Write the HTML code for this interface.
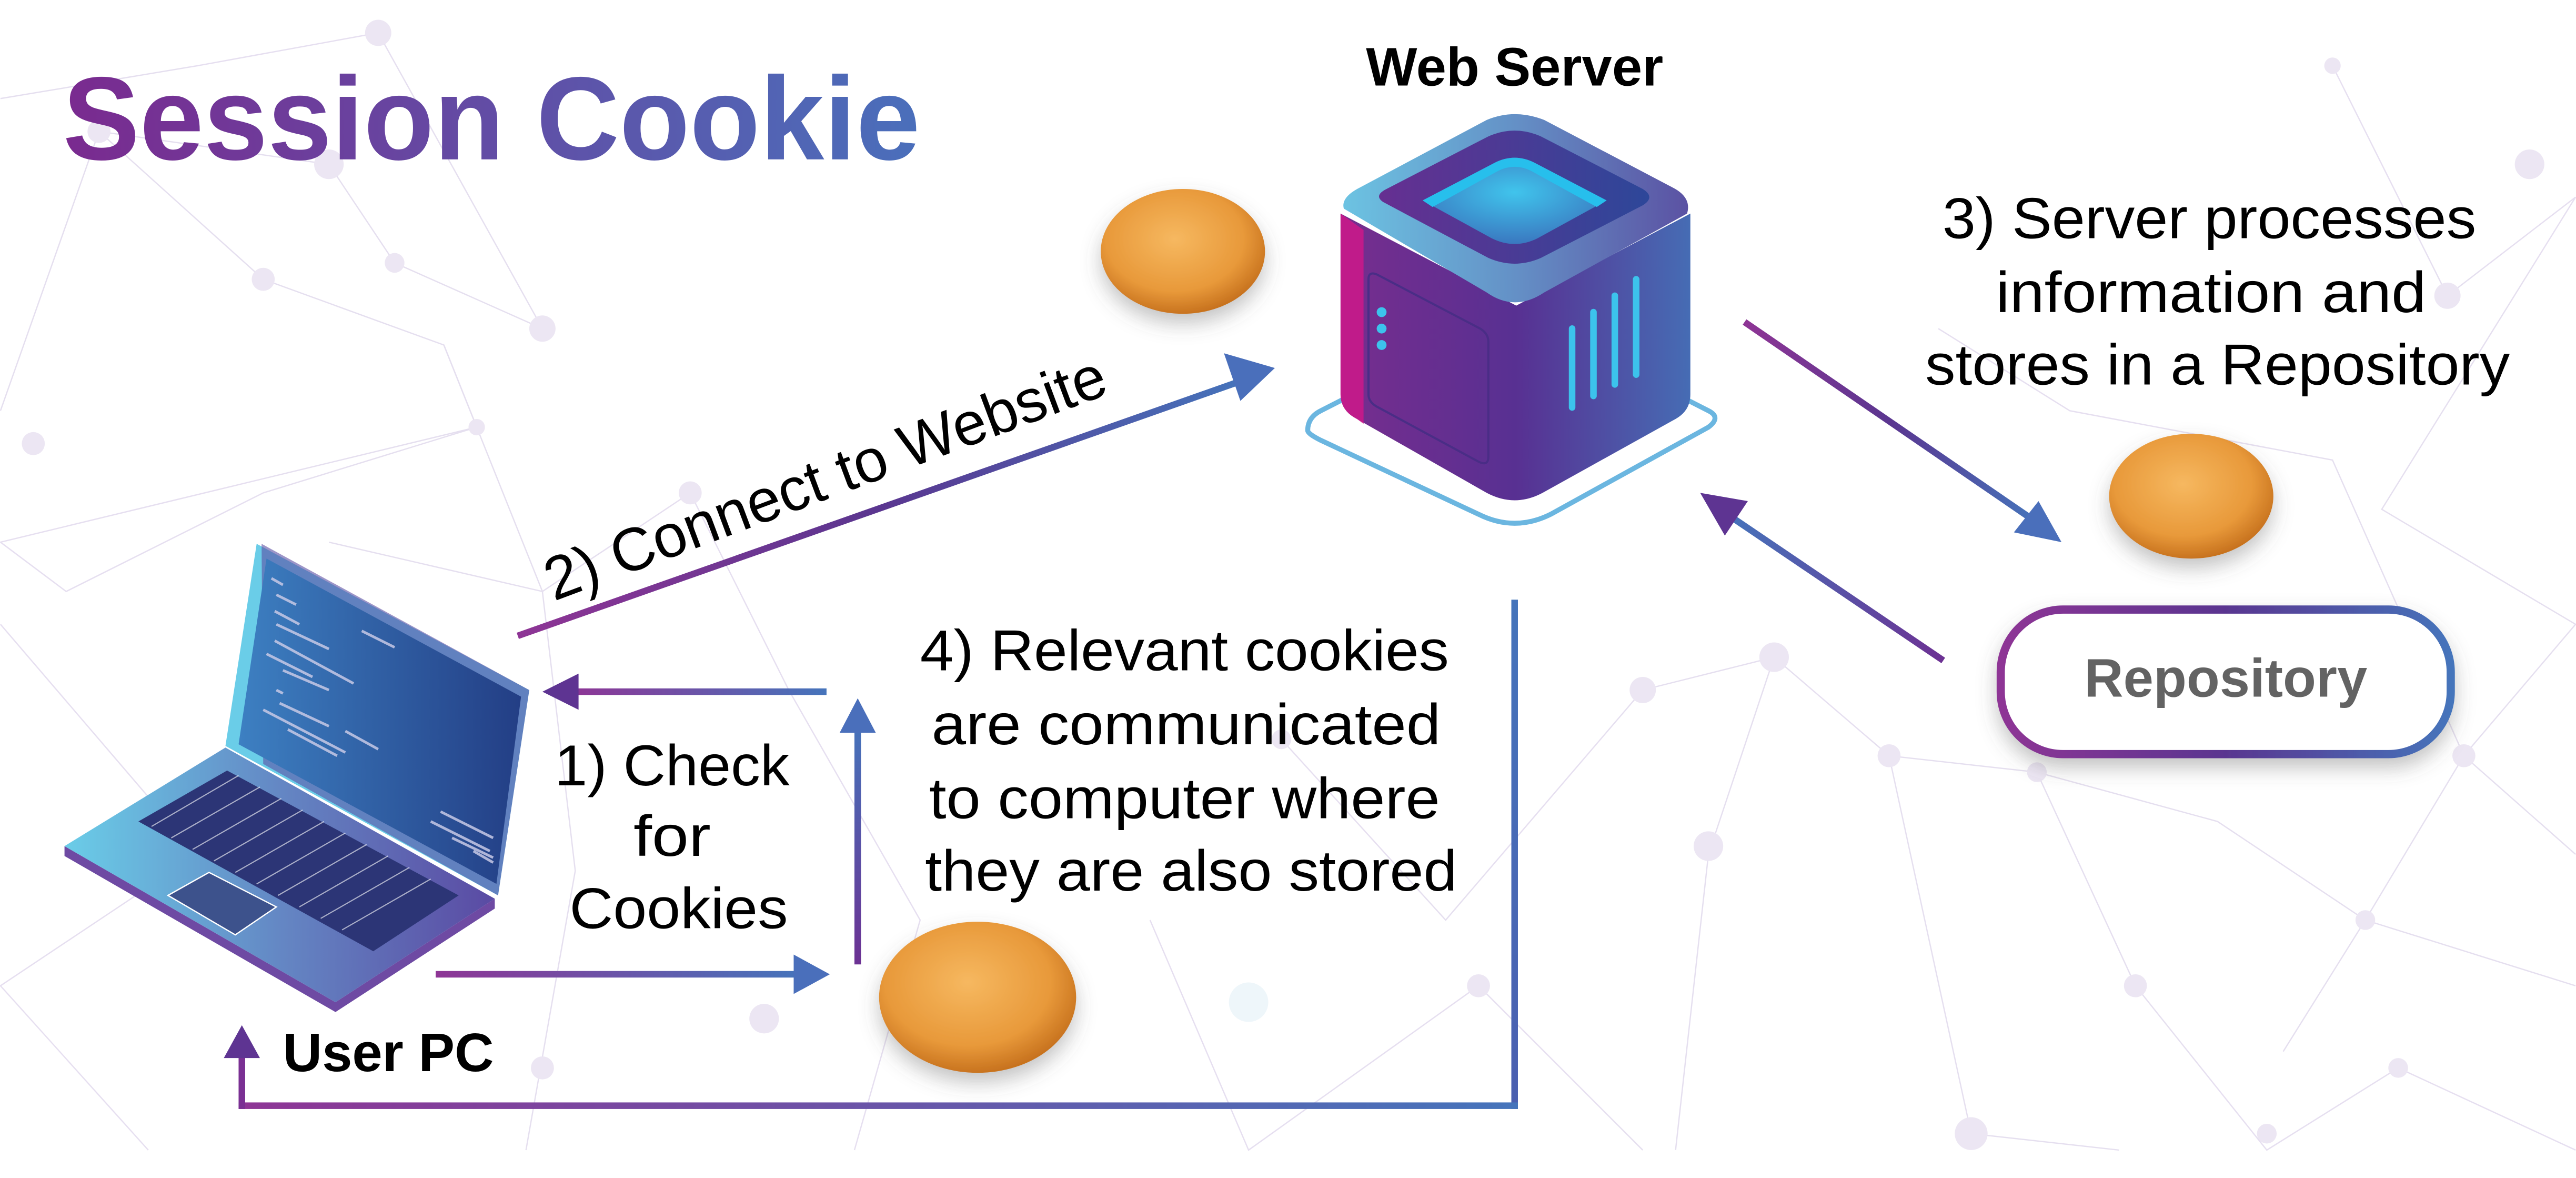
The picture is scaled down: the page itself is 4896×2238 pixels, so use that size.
<!DOCTYPE html>
<html><head><meta charset="utf-8"><style>
html,body{margin:0;padding:0;background:#fff;}
svg{display:block;}
text{font-family:"Liberation Sans",sans-serif;}
</style></head><body>
<svg width="4896" height="2238" viewBox="0 0 1568 717" xmlns="http://www.w3.org/2000/svg">
<defs>
<linearGradient id="tg" x1="0" x2="1"><stop offset="0" stop-color="#7a2a8f"/><stop offset="1" stop-color="#4a6fbb"/></linearGradient>
<linearGradient id="pb" x1="0" x2="1"><stop offset="0" stop-color="#8e3595"/><stop offset="0.5" stop-color="#5a3690"/><stop offset="1" stop-color="#4574bb"/></linearGradient>
<linearGradient id="bp" x1="0" x2="1"><stop offset="0" stop-color="#4574bb"/><stop offset="1" stop-color="#6c3193"/></linearGradient>
<linearGradient id="pbH" x1="0" x2="1"><stop offset="0" stop-color="#8e3595"/><stop offset="1" stop-color="#4574bb"/></linearGradient>
<linearGradient id="vg" x1="0" y1="1" x2="0" y2="0"><stop offset="0" stop-color="#6c3193"/><stop offset="1" stop-color="#4574bb"/></linearGradient>
<linearGradient id="vg2" x1="0" y1="0" x2="0" y2="1"><stop offset="0" stop-color="#4574bb"/><stop offset="1" stop-color="#4a5fb0"/></linearGradient>
<linearGradient id="srvF" x1="0" x2="1"><stop offset="0" stop-color="#772d8e"/><stop offset="0.5" stop-color="#583092"/><stop offset="1" stop-color="#466cb4"/></linearGradient>
<linearGradient id="srvT" x1="0" x2="1"><stop offset="0" stop-color="#6cc3e2"/><stop offset="0.5" stop-color="#6490c6"/><stop offset="1" stop-color="#5b52a3"/></linearGradient>
<linearGradient id="srvI" x1="0" x2="1"><stop offset="0" stop-color="#662f91"/><stop offset="1" stop-color="#2d4799"/></linearGradient>
<radialGradient id="scr" cx="0.5" cy="0.4" r="0.6"><stop offset="0" stop-color="#40c4ec"/><stop offset="1" stop-color="#3a78c0"/></radialGradient>
<linearGradient id="lapS" x1="0" x2="1"><stop offset="0" stop-color="#3d80c2"/><stop offset="1" stop-color="#233e85"/></linearGradient>
<linearGradient id="lapB" x1="0" x2="1"><stop offset="0" stop-color="#6acde8"/><stop offset="0.5" stop-color="#6487c4"/><stop offset="1" stop-color="#5a4aa3"/></linearGradient>
<radialGradient id="ck" cx="0.45" cy="0.4" r="0.6"><stop offset="0" stop-color="#f6b860"/><stop offset="0.7" stop-color="#e8993a"/><stop offset="1" stop-color="#c8731f"/></radialGradient>
<filter id="sh" x="-20%" y="-20%" width="140%" height="160%"><feDropShadow dx="0" dy="6" stdDeviation="6" flood-color="#555" flood-opacity="0.35"/></filter>
</defs>

<!-- background network -->
<g stroke="#e3dcee" stroke-width="0.8" fill="none" opacity="0.9">
<path d="M0 250 L60 80 L200 100 L240 160 L330 200 L230 20 L120 40 L0 60"/>
<path d="M60 80 L160 170 L270 210 L290 260 L0 330 L40 360 L160 300 L290 260"/>
<path d="M270 210 L330 360 L350 530 L320 700"/>
<path d="M200 330 L330 360 L420 300 L480 420 L560 560 L520 700"/>
<path d="M0 380 L120 520 L0 600 L90 700"/>
<path d="M1000 420 L1080 400 L1150 460 L1240 470 L1300 600 L1380 700 L1460 650 L1568 700"/>
<path d="M1080 400 L1040 520 L1020 700"/><path d="M1150 460 L1200 690 L1290 700"/>
<path d="M1420 40 L1490 180 L1568 120 L1450 310 L1568 380 L1500 460 L1568 520"/>
<path d="M1180 200 L1260 250 L1420 280 L1500 460 L1440 560 L1568 600"/>
<path d="M700 560 L760 700 L900 600 L1000 700"/><path d="M780 450 L880 560 L1000 420"/>
<path d="M1240 470 L1350 500 L1440 560 L1390 640"/>
</g>
<g fill="#ece6f3">
<circle cx="60" cy="80" r="7"/><circle cx="200" cy="100" r="9"/><circle cx="240" cy="160" r="6"/><circle cx="160" cy="170" r="7"/><circle cx="290" cy="260" r="5"/><circle cx="20" cy="270" r="7"/><circle cx="330" cy="200" r="8"/><circle cx="230" cy="20" r="8"/>
<circle cx="1080" cy="400" r="9"/><circle cx="1150" cy="460" r="7"/><circle cx="1040" cy="515" r="9"/><circle cx="1240" cy="470" r="6"/><circle cx="1300" cy="600" r="7"/><circle cx="1200" cy="690" r="10"/><circle cx="1380" cy="690" r="6"/><circle cx="1460" cy="650" r="6"/>
<circle cx="1490" cy="180" r="8"/><circle cx="1420" cy="40" r="5"/><circle cx="1500" cy="460" r="7"/><circle cx="1440" cy="560" r="6"/><circle cx="1540" cy="100" r="9"/>
<circle cx="900" cy="600" r="7"/><circle cx="1000" cy="420" r="8"/><circle cx="780" cy="450" r="6"/><circle cx="760" cy="610" r="12" fill="#eef6fa"/>
<circle cx="465" cy="620" r="9"/><circle cx="330" cy="650" r="7"/><circle cx="420" cy="300" r="7"/>
</g>

<!-- title -->
<text x="38" y="97" font-size="72" font-weight="bold" fill="url(#tg)" textLength="522" lengthAdjust="spacingAndGlyphs">Session Cookie</text>
<text x="922" y="52" font-size="33" font-weight="bold" fill="#000" text-anchor="middle">Web Server</text>

<!-- server -->
<path d="M796 262 Q796 254 804 250 L900 201 Q922 190 944 201 L1040 250 Q1048 254 1040 260 L944 313 Q922 324 900 313 L804 268 Q796 264 796 262Z" fill="#fff" stroke="#6bb6e0" stroke-width="3"/>
<path d="M816 130 L816 240 Q816 250 826 255 L905 300 Q922 309 939 300 L1020 255 Q1029 250 1029 240 L1029 130 L923 186Z" fill="url(#srvF)"/>
<path d="M816 130 L816 240 Q816 250 826 255 L830 258 L830 140Z" fill="#d3168a" opacity="0.8"/>
<path d="M818 127 Q816 120 828 114 L905 73 Q922 66 940 73 L1018 114 Q1030 120 1027 130 L940 178 Q922 190 905 178Z" fill="url(#srvT)"/>
<path d="M842 123 Q836 119 844 115 L906 83 Q922 76 938 83 L1000 115 Q1008 120 1000 125 L938 157 Q922 164 906 157Z" fill="url(#srvI)"/>
<path d="M866 122 L910 99 Q922 93 934 99 L978 122 L936 145 Q922 152 908 145Z" fill="url(#scr)"/>
<path d="M866 122 L910 99 Q922 93 934 99 L978 122 L972 126 L932 104 Q922 99 912 104 L872 126Z" fill="#27bfec"/>
<path d="M833 170 Q833 165 838 167 L901 200 Q906 203 906 208 L906 278 Q906 284 900 281 L839 248 Q833 245 833 240Z" fill="none" stroke="#4a2d86" stroke-width="1.3"/>
<circle cx="841" cy="190" r="3" fill="#3cc3ec"/><circle cx="841" cy="200" r="3" fill="#3cc3ec"/><circle cx="841" cy="210" r="3" fill="#3cc3ec"/>
<g stroke="#3cc3ec" stroke-width="4" stroke-linecap="round" fill="none">
<path d="M957 248 L957 200"/><path d="M970 241 L970 190"/><path d="M983 234 L983 180"/><path d="M996 228 L996 170"/>
</g>

<!-- laptop -->
<path d="M39 515 L39 521 L204 616 L301 553 L301 547 L204 610Z" fill="#6e4aa3"/>
<path d="M39 515 L137 455 L301 547 L204 610Z" fill="url(#lapB)"/>
<path d="M84 500 L138 469 L279 545 L227 579Z" fill="#2c3576"/>
<g stroke="#fff" stroke-width="0.7" opacity="0.6">
<path d="M92 503 L145 472"/><path d="M104 510 L158 479"/><path d="M117 517 L171 486"/><path d="M130 524 L184 493"/><path d="M143 531 L197 500"/><path d="M156 538 L210 507"/><path d="M169 545 L223 514"/><path d="M182 552 L236 521"/><path d="M195 559 L249 528"/><path d="M208 566 L262 535"/>
</g>
<path d="M102 545 L127 531 L168 552 L143 569Z" fill="#3d528c" stroke="#fff" stroke-width="0.8"/>
<path d="M156 331 L322 420 L303 545 L137 454Z" fill="#6acde8"/>
<path d="M159 331 L322 420 L303 545 L160 465Z" fill="#5b4fa4" opacity="0.6"/>
<path d="M162 340 L317 424 L302 538 L145 453Z" fill="url(#lapS)"/>
<g stroke="#c7c9e6" stroke-width="1.6" opacity="0.85">
<path d="M165 352 L172 356 M168 362 L180 368 M167 372 L182 380 M168 380 L200 395 M220 384 L240 394 M167 390 L215 416 M162 398 L190 412 M172 408 L200 420 M168 420 L172 422 M170 428 L200 442 M160 432 L210 458 M175 444 L205 460 M210 445 L230 456"/>
<path d="M268 494 L300 510 M262 500 L298 518 M275 510 L300 522 M288 518 L300 525"/>
</g>

<!-- cookies -->
<g filter="url(#sh)">
<ellipse cx="720" cy="153" rx="50" ry="38" fill="url(#ck)"/>
<ellipse cx="1334" cy="302" rx="50" ry="38" fill="url(#ck)"/>
<ellipse cx="595" cy="607" rx="60" ry="46" fill="url(#ck)"/>
</g>

<!-- arrows -->
<line x1="315" y1="387" x2="758" y2="231" stroke="url(#pb)" stroke-width="4"/>
<path d="M776 224 L745 215 L755 244Z" fill="#4a6fbb"/>
<rect x="348" y="419" width="155" height="4" fill="url(#pbH)"/>
<path d="M330 421 L352 410 L352 432Z" fill="#5e3492"/>
<rect x="265" y="591" width="223" height="4" fill="url(#pbH)"/>
<path d="M505 593 L483 581 L483 605Z" fill="#4a6fbb"/>
<rect x="520" y="440" width="4" height="147" fill="url(#vg)"/>
<path d="M522 425 L511 446 L533 446Z" fill="#4a6fbb"/>
<rect x="920" y="365" width="4" height="310" fill="url(#vg2)"/>
<rect x="145" y="671" width="779" height="4" fill="url(#pbH)"/>
<rect x="145" y="642" width="4" height="33" fill="#7a3093"/>
<path d="M147 624 L136 644 L158 644Z" fill="#5e3492"/>
<line x1="1062" y1="196" x2="1240" y2="318" stroke="url(#pb)" stroke-width="4"/>
<path d="M1255 330 L1226 324 L1241 305Z" fill="#4a6fbb"/>
<line x1="1183" y1="402" x2="1050" y2="312" stroke="url(#bp)" stroke-width="4"/>
<path d="M1035 300 L1064 305 L1050 326Z" fill="#5e3492"/>

<!-- repository -->
<rect x="1218" y="371" width="274" height="88" rx="38" fill="#fff" stroke="url(#pb)" stroke-width="5" filter="url(#sh)"/>
<text x="1355" y="424" font-size="33" font-weight="bold" fill="#636363" text-anchor="middle">Repository</text>

<!-- labels -->
<g font-size="35" fill="#000" text-anchor="middle">
<text x="1345" y="145" textLength="325" lengthAdjust="spacingAndGlyphs">3) Server processes</text>
<text x="1346" y="190" textLength="262" lengthAdjust="spacingAndGlyphs">information and</text>
<text x="1350" y="234" textLength="356" lengthAdjust="spacingAndGlyphs">stores in a Repository</text>
<text x="721" y="408" textLength="322" lengthAdjust="spacingAndGlyphs">4) Relevant cookies</text>
<text x="722" y="453" textLength="310" lengthAdjust="spacingAndGlyphs">are communicated</text>
<text x="721" y="498" textLength="311" lengthAdjust="spacingAndGlyphs">to computer where</text>
<text x="725" y="542" textLength="324" lengthAdjust="spacingAndGlyphs">they are also stored</text>
<text x="409" y="478" textLength="143" lengthAdjust="spacingAndGlyphs">1) Check</text>
<text x="409" y="521" textLength="47" lengthAdjust="spacingAndGlyphs">for</text>
<text x="413" y="565" textLength="133" lengthAdjust="spacingAndGlyphs">Cookies</text>
</g>
<text x="0" y="0" font-size="37" fill="#000" transform="translate(337,366) rotate(-20.5)" textLength="362" lengthAdjust="spacingAndGlyphs">2) Connect to Website</text>
<text x="172" y="652" font-size="33" font-weight="bold" fill="#000">User PC</text>
</svg>
</body></html>
